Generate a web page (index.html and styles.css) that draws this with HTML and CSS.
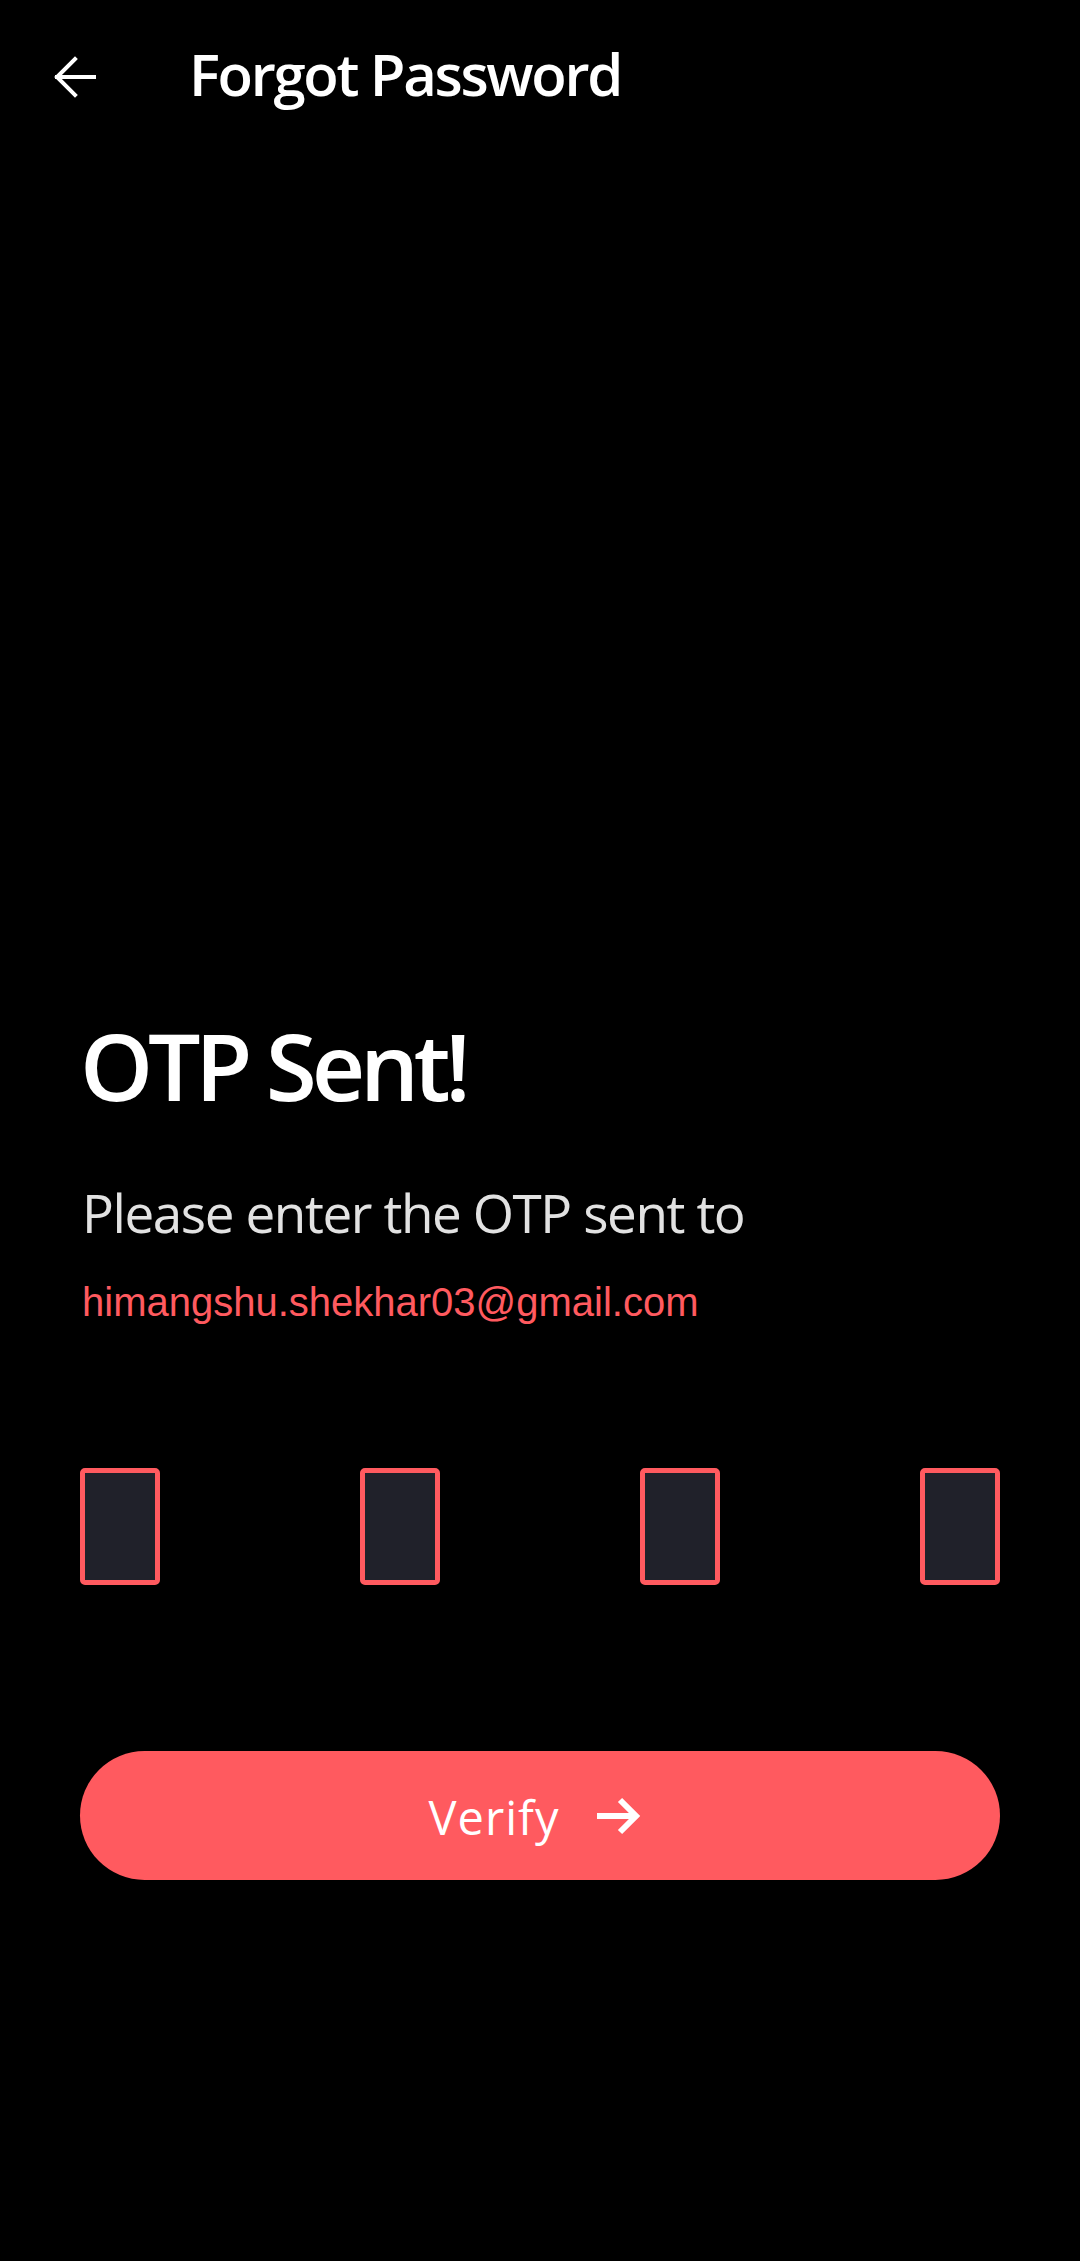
FILE: index.html
```html
<!DOCTYPE html>
<html lang="en">
<head>
<meta charset="utf-8">
<title>Forgot Password</title>
<link rel="stylesheet" href="styles.css">
</head>
<body>
<div class="screen">
  <header class="topbar">
    <svg class="back" width="44" height="44" viewBox="0 0 44 44" aria-hidden="true">
      <path d="M42 22 H5 M23 4 L5 22 L23 40" fill="none" stroke="#fff" stroke-width="4" stroke-linecap="square" stroke-linejoin="miter"/>
    </svg>
    <h1 class="topbar-title">Forgot Password</h1>
  </header>
  <main class="content">
    <h2 class="heading">OTP Sent!</h2>
    <p class="subtitle">Please enter the OTP sent to</p>
    <p class="email">himangshu.shekhar03@gmail.com</p>
    <div class="otp-row">
      <div class="otp-box"></div>
      <div class="otp-box"></div>
      <div class="otp-box"></div>
      <div class="otp-box"></div>
    </div>
    <button class="verify" type="button">
      <span class="verify-label">Verify</span>
      <svg class="verify-arrow" width="46" height="40" viewBox="0 0 46 40" aria-hidden="true">
        <path d="M2 20 H41 M25 4 L41 20 L25 36" fill="none" stroke="#fff" stroke-width="6" stroke-linecap="butt" stroke-linejoin="miter"/>
      </svg>
    </button>
  </main>
</div>
</body>
</html>
```
FILE: styles.css
```css
html, body {
  margin: 0;
  padding: 0;
  background: #000;
}
.screen {
  width: 1080px;
  height: 2261px;
  background: #000;
  font-family: "Open Sans", "Noto Sans", sans-serif;
  color: #fff;
  overflow: hidden;
}
.topbar {
  height: 148px;
  display: flex;
  align-items: center;
  padding-left: 52px;
}
.back {
  margin-top: 6px;
  flex: none;
}
.topbar-title {
  margin: 0 0 0 93px;
  font-size: 58px;
  line-height: 58px;
  font-weight: 600;
  letter-spacing: -2.3px;
}
.content {
  padding: 0 80px;
}
.heading {
  margin: 870px 0 0 0;
  font-size: 93px;
  line-height: 94px;
  font-weight: 600;
  letter-spacing: -5.3px;
}
.subtitle {
  margin: 74px 0 0 2px;
  font-size: 53px;
  line-height: 53px;
  font-weight: 400;
  color: #e2e2e2;
  letter-spacing: -1.4px;
}
.email {
  margin: 43px 0 0 2px;
  font-family: "Liberation Sans", Arial, sans-serif;
  font-size: 40px;
  line-height: 40px;
  color: #ff5a5f;
}
.otp-row {
  margin-top: 146px;
  display: flex;
  justify-content: space-between;
}
.otp-box {
  width: 80px;
  height: 117px;
  box-sizing: border-box;
  border: 5px solid #ff5a5f;
  border-radius: 5px;
  background: #20212a;
}
.verify {
  margin-top: 166px;
  width: 100%;
  height: 129px;
  border: none;
  border-radius: 65px;
  background: #ff5a5f;
  display: flex;
  align-items: center;
  justify-content: center;
  gap: 36px;
  padding: 0 10px 0 0;
  font-family: "Open Sans", "Noto Sans", sans-serif;
  color: #fff;
}
.verify-label {
  font-size: 47px;
  line-height: 47px;
  font-weight: 400;
  letter-spacing: 1px;
  margin-top: 4px;
}
.verify-arrow {
  flex: none;
}
```
